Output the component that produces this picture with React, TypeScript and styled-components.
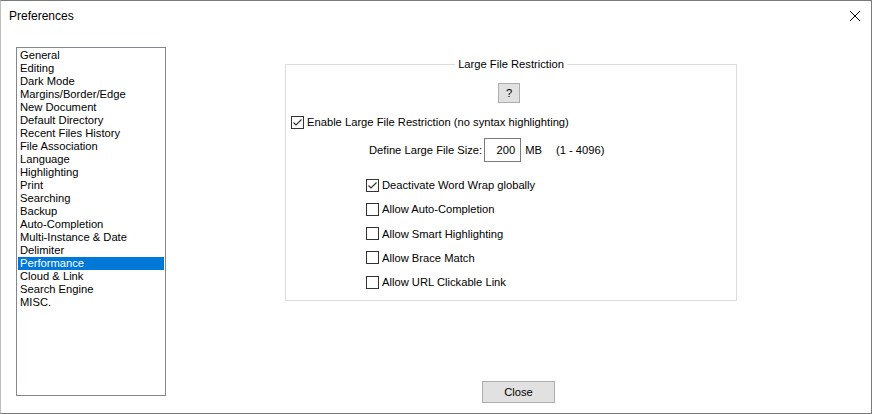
import React from "react";
import styled, { createGlobalStyle } from "styled-components";

const Global = createGlobalStyle`
  body { margin: 0; background: #fff; }
  * { box-sizing: border-box; }
`;

const Window = styled.div`
  width: 872px; height: 414px; background: #fff;
  border: 1px solid #7a7a7a; border-left-color: #bdbdbd;
  display: flex; flex-direction: column;
  font-family: "Liberation Sans", Arial, sans-serif; font-size: 11.2px; color: #000;
`;
const TitleBar = styled.div`
  height: 30px; display: flex; align-items: center; justify-content: space-between;
  padding: 0 10px 0 8px; font-size: 12px;
`;
const Body = styled.div`flex: 1; display: flex;`;
const ListBox = styled.div`
  margin: 16px 0 0 15px; width: 150px; height: 349px;
  border: 1px solid #828790; padding: 1px 1px; display: flex; flex-direction: column;
`;
const Item = styled.div<{ $sel?: boolean }>`
  height: 13px; line-height: 13px; padding-left: 2px; white-space: nowrap; overflow: hidden;
  background: ${p => (p.$sel ? "#0078d7" : "transparent")};
  color: ${p => (p.$sel ? "#fff" : "#000")};
`;
const Pane = styled.div`flex: 1; display: flex; flex-direction: column; align-items: flex-start; padding-bottom: 10px;`;
const Group = styled.div`
  position: relative; margin: 33px 0 0 119px; width: 452px; height: 237px;
  border: 1px solid #dcdcdc; display: flex; flex-direction: column; padding-top: 18px;
`;
const GroupTitle = styled.span`
  position: absolute; top: -8px; left: 50%; transform: translateX(-50%);
  background: #fff; padding: 0 3px; white-space: nowrap; line-height: 15px;
`;
const Btn = styled.button<{ $w: number; $h: number }>`
  width: ${p => p.$w}px; height: ${p => p.$h}px; background: #e1e1e1;
  border: 1px solid #adadad; font: inherit; padding: 0; color: #000;
`;
const Row = styled.div<{ $ml: number; $mt: number; $h?: number }>`
  display: flex; align-items: center; margin-left: ${p => p.$ml}px; margin-top: ${p => p.$mt}px;
  height: ${p => p.$h ?? 16}px; white-space: nowrap;
`;
const Box = styled.span`
  width: 13px; height: 13px; border: 1px solid #333; background: #fff; margin-right: 3px;
  display: inline-flex; align-items: center; justify-content: center;
`;
const Input = styled.div`
  width: 37px; height: 24px; border: 1px solid #7a7a7a; display: flex; align-items: center;
  justify-content: flex-end; padding-right: 5px; margin-left: 2px;
`;
const Gap = styled.span<{ $w: number }>`display: inline-block; width: ${p => p.$w}px;`;
const Footer = styled.div`margin-top: auto; align-self: stretch; display: flex; justify-content: center;`;

const Check = ({ on }: { on?: boolean }) => (
  <Box>
    {on && (
      <svg width="11" height="11" viewBox="0 0 11 11">
        <path d="M1.5 5.5 L4 8 L9.5 2.5" stroke="#333" strokeWidth="1.2" fill="none" />
      </svg>
    )}
  </Box>
);

const items = ["General","Editing","Dark Mode","Margins/Border/Edge","New Document","Default Directory","Recent Files History","File Association","Language","Highlighting","Print","Searching","Backup","Auto-Completion","Multi-Instance & Date","Delimiter","Performance","Cloud & Link","Search Engine","MISC."];

export default function App() {
  return (
    <Window>
      <Global />
      <TitleBar>
        <span>Preferences</span>
        <svg width="12" height="12" viewBox="0 0 12 12">
          <path d="M1 1 L11 11 M11 1 L1 11" stroke="#000" strokeWidth="1" />
        </svg>
      </TitleBar>
      <Body>
        <ListBox>
          {items.map(t => <Item key={t} $sel={t === "Performance"}>{t}</Item>)}
        </ListBox>
        <Pane>
          <Group>
            <GroupTitle>Large File Restriction</GroupTitle>
            <Row $ml={212} $mt={0} $h={20}><Btn $w={22} $h={20}>?</Btn></Row>
            <Row $ml={5} $mt={11}><Check on />Enable Large File Restriction (no syntax highlighting)</Row>
            <Row $ml={83} $mt={8} $h={24}>
              Define Large File Size:<Input>200</Input><Gap $w={4} />MB<Gap $w={14} />(1 - 4096)
            </Row>
            <Row $ml={80} $mt={15}><Check on />Deactivate Word Wrap globally</Row>
            <Row $ml={80} $mt={8.3}><Check />Allow Auto-Completion</Row>
            <Row $ml={80} $mt={8.3}><Check />Allow Smart Highlighting</Row>
            <Row $ml={80} $mt={8.3}><Check />Allow Brace Match</Row>
            <Row $ml={80} $mt={8.3}><Check />Allow URL Clickable Link</Row>
          </Group>
          <Footer><Btn $w={73} $h={22}>Close</Btn></Footer>
        </Pane>
      </Body>
    </Window>
  );
}
